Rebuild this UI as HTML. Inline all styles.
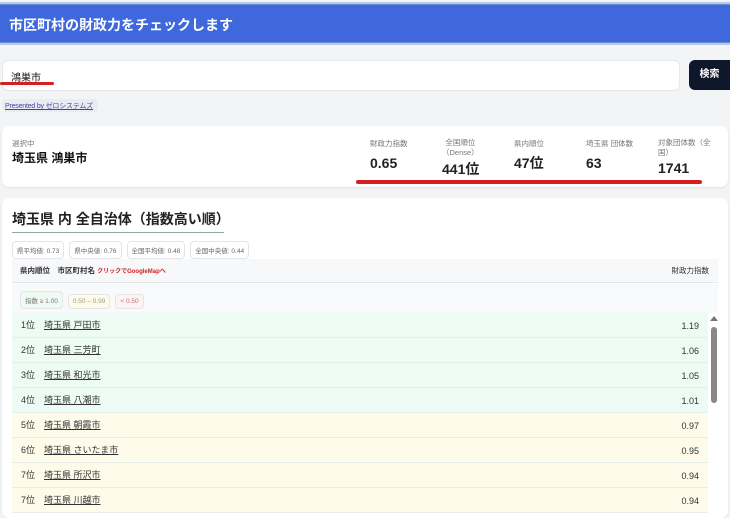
<!DOCTYPE html>
<html><head><meta charset="utf-8"><style>
*{box-sizing:border-box;margin:0;padding:0}
body{width:730px;height:512px;overflow:hidden;background:#f3f4f6;font-family:"Liberation Sans","Noto Sans CJK JP",sans-serif;color:#111;position:relative}
.abs{position:absolute}
.hdr{left:0;top:2px;width:730px;height:43px;background:#3f68dc;border-top:2px solid #b8c8e8;border-bottom:2px solid #b8c8e8;box-shadow:inset 0 1px 0 #6a8ad0,inset 0 -1px 0 #6a8ad0}
.hdr span{position:absolute;left:9px;top:11px;color:#fff;font-size:14px;font-weight:bold}
.inp{left:2px;top:60px;width:678px;height:31px;background:#fff;border:1px solid #e5e7eb;border-radius:6px}
.btn{left:689px;top:60px;width:41px;height:30px;background:#0f172a;border-radius:6px 0 0 6px;color:#fff;font-size:10px;font-weight:bold;text-align:center;line-height:30px}
.red{background:#d42020;border-radius:2px}
.card{background:#fff;border-radius:7px;box-shadow:0 1px 2px rgba(0,0,0,.08)}
.lbl{font-size:7.5px;color:#777}
.val{font-size:14px;font-weight:bold;color:#222}
.chip{display:inline-block;font-size:6.5px;color:#666;border:1px solid #e3e5e8;border-radius:4px;padding:3px 4px;margin-right:5px;background:#fff}
.row{position:absolute;left:12px;width:696px;height:25px;border-bottom:1px solid #e6ece8;font-size:9px;color:#333}
.row span{line-height:12px}
.row .r{position:absolute;left:9px;top:6px}
.row .n{position:absolute;left:32px;top:6px;text-decoration:underline;color:#333}
.row .v{position:absolute;right:9px;top:7px}
.g{background:#ecfbf3}.y{background:#fefbeb}
</style></head><body>
<div class="abs hdr"><span>市区町村の財政力をチェックします</span></div>
<div class="abs inp"><span class="abs" style="left:8px;top:8px;font-size:10px">鴻巣市</span></div>
<div class="abs red" style="left:0;top:82px;width:54px;height:3px"></div>
<div class="abs btn">検索</div>
<div class="abs" style="left:2px;top:99px;width:96px;height:13px;background:#e9edf3;border-radius:4px;font-size:7px;color:#4b3fa0;text-decoration:underline;padding:2px 3px;white-space:nowrap;letter-spacing:-0.2px">Presented by ゼロシステムズ</div>
<div class="abs card" style="left:2px;top:126px;width:726px;height:61px"></div>
<div class="abs lbl" style="left:12px;top:138px">選択中</div>
<div class="abs" style="left:12px;top:149px;font-size:12px;font-weight:bold">埼玉県 鴻巣市</div>
<div class="abs lbl" style="left:370px;top:138px">財政力指数</div>
<div class="abs val" style="left:370px;top:155px">0.65</div>
<div class="abs lbl" style="left:442px;top:138px;text-align:center;line-height:10px">全国順位<br>（Dense）</div>
<div class="abs val" style="left:442px;top:159px">441位</div>
<div class="abs lbl" style="left:514px;top:138px">県内順位</div>
<div class="abs val" style="left:514px;top:153px">47位</div>
<div class="abs lbl" style="left:586px;top:138px">埼玉県 団体数</div>
<div class="abs val" style="left:586px;top:155px">63</div>
<div class="abs lbl" style="left:658px;top:138px;width:60px;line-height:10px">対象団体数（全国）</div>
<div class="abs val" style="left:658px;top:160px">1741</div>
<div class="abs red" style="left:356px;top:180px;width:346px;height:4px"></div>
<div class="abs card" style="left:2px;top:198px;width:726px;height:320px"></div>
<div class="abs" style="left:12px;top:209px;font-size:14px;font-weight:bold;color:#222">埼玉県 内 全自治体（指数高い順）</div>
<div class="abs" style="left:12px;top:232px;width:212px;height:1px;background:#8aa"></div>
<div class="abs" style="left:12px;top:240px;white-space:nowrap"><span class="chip">県平均値: 0.73</span><span class="chip">県中央値: 0.76</span><span class="chip">全国平均値: 0.48</span><span class="chip">全国中央値: 0.44</span></div>
<div class="abs" style="left:12px;top:259px;width:706px;height:24px;background:#f7f8fa;border-bottom:1px solid #e5e7eb;font-size:7.5px;font-weight:bold;color:#333">
<span class="abs" style="left:8px;top:6px">県内順位　市区町村名 <span style="color:#d42020;font-size:6px">クリックでGoogleMapへ</span></span>
<span class="abs" style="right:9px;top:6px;font-weight:normal">財政力指数</span></div>
<div class="abs" style="left:12px;top:284px;width:706px;height:29px;background:#f8f9fb"></div>
<div class="abs" style="left:20px;top:291px;white-space:nowrap;font-size:6.5px">
<span class="chip" style="background:#effaf3;color:#777">指数 ≥ 1.00</span><span class="chip" style="background:#fffbe9;color:#998">0.50 – 0.99</span><span class="chip" style="background:#fdf2f4;color:#b77">&lt; 0.50</span></div>
<div class="row g" style="top:313px"><span class="r">1位</span><span class="n">埼玉県 戸田市</span><span class="v">1.19</span></div>
<div class="row g" style="top:338px"><span class="r">2位</span><span class="n">埼玉県 三芳町</span><span class="v">1.06</span></div>
<div class="row g" style="top:363px"><span class="r">3位</span><span class="n">埼玉県 和光市</span><span class="v">1.05</span></div>
<div class="row g" style="top:388px"><span class="r">4位</span><span class="n">埼玉県 八潮市</span><span class="v">1.01</span></div>
<div class="row y" style="top:413px"><span class="r">5位</span><span class="n">埼玉県 朝霞市</span><span class="v">0.97</span></div>
<div class="row y" style="top:438px"><span class="r">6位</span><span class="n">埼玉県 さいたま市</span><span class="v">0.95</span></div>
<div class="row y" style="top:463px"><span class="r">7位</span><span class="n">埼玉県 所沢市</span><span class="v">0.94</span></div>
<div class="row y" style="top:488px"><span class="r">7位</span><span class="n">埼玉県 川越市</span><span class="v">0.94</span></div>
<div class="abs" style="left:710px;top:316px;width:0;height:0;border-left:4px solid transparent;border-right:4px solid transparent;border-bottom:5px solid #777"></div>
<div class="abs" style="left:711px;top:327px;width:6px;height:76px;background:#888;border-radius:3px"></div>
</body></html>
